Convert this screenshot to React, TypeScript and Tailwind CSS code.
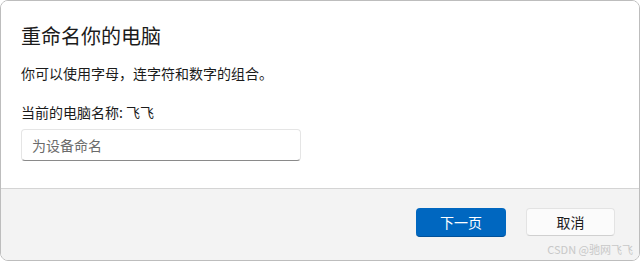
import React from "react";

export default function App() {
  return (
    <div className="w-[640px] h-[262px] bg-white" style={{ fontFamily: '"Noto Sans CJK SC", "Noto Sans", sans-serif' }}>
      <div className="h-[261px] border border-[#bdbdbd] rounded-[8px] overflow-hidden flex flex-col">
        <div className="flex-1 bg-white pl-[20px] pt-[21px]">
          <h1 className="text-[20px] leading-[28px] text-[#1b1b1b] font-normal">重命名你的电脑</h1>
          <p className="mt-[13px] text-[14px] leading-[20px] text-[#1b1b1b]">你可以使用字母，连字符和数字的组合。</p>
          <p className="mt-[19px] text-[14px] leading-[20px] text-[#1b1b1b]">当前的电脑名称: 飞飞</p>
          <div className="mt-[7px] w-[280px] h-[32px] rounded-[4px] border border-[#e5e5e5] border-b-[#8a8a8a] bg-white flex items-center pl-[10px]">
            <span className="text-[14px] leading-[20px] text-[#6b6b6b]">为设备命名</span>
          </div>
        </div>
        <div className="relative h-[72px] bg-[#f3f3f3] border-t border-[#d4d4d4] flex justify-end items-start gap-[20px] pr-[24px] pt-[19px]">
          <div className="w-[90px] h-[29px] rounded-[4px] bg-[#0067c0] border-b border-[#00519a] flex items-center justify-center text-white text-[14px] leading-[20px]">下一页</div>
          <div className="w-[89px] h-[28px] rounded-[4px] bg-[#fbfbfb] border border-[#e3e3e3] border-b-[#d0d0d0] flex items-center justify-center text-[#1b1b1b] text-[14px] leading-[20px]">取消</div>
          <span className="absolute right-[6px] bottom-[4px] text-[11px] leading-[14px] text-[#c8c8c8]">CSDN @驰网飞飞</span>
        </div>
      </div>
    </div>
  );
}
